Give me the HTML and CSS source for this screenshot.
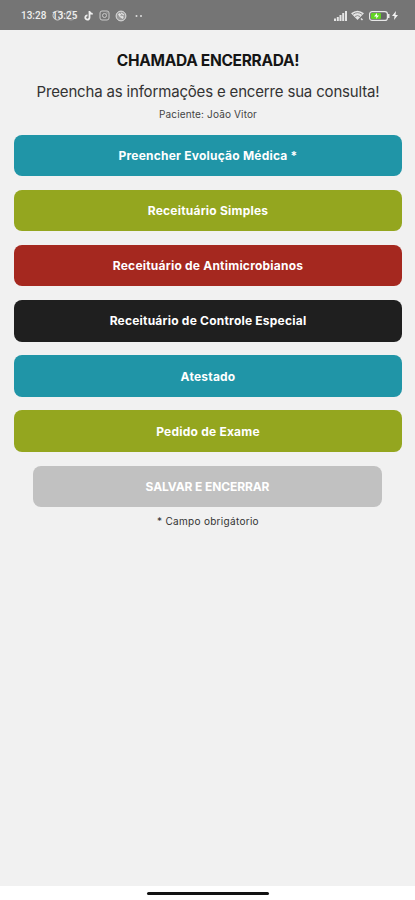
FILE: index.html
```html
<!DOCTYPE html>
<html lang="pt-BR">
<head>
  <meta charset="UTF-8">
  <meta name="viewport" content="width=device-width, initial-scale=1">
  <title>Chamada encerrada</title>
  <link rel="stylesheet" href="styles.css">
</head>
<body>

  <header class="status-bar">
    <div class="status-left">
      <span class="clock">13:28</span>
      <span class="notification">
        <svg width="25" height="11" viewBox="0 0 25 11" fill="none" stroke="#d5d5d5"><circle cx="5.5" cy="5.5" r="4.5"/><circle cx="19" cy="5.5" r="4.5" stroke="#aaa"/></svg>
        <span>13:25</span>
      </span>
      <svg class="tiktok" width="10" height="11" viewBox="0 0 10 11"><path d="M5.5 1v6.5a2.1 2.1 0 1 1-2-2.1M5.5 1c.2 1.8 1.3 2.8 3.2 2.9" fill="none" stroke="#eee" stroke-width="1.8"/></svg>
      <svg class="insta" width="11" height="11" viewBox="0 0 11 11" fill="none" stroke="#c9c9c9"><rect x="1" y="1" width="9" height="9" rx="2"/><circle cx="5.5" cy="5.5" r="2"/><path d="M7.5 3h1"/></svg>
      <svg class="whats" width="12" height="12" viewBox="0 0 12 12" fill="none" stroke="#e0e0e0"><circle cx="6" cy="6" r="4.9" fill="#999"/><path d="M3.5 4c1 2.5 2 3.5 4.5 4.5M4 3.5l2 1.5M6.5 6l2 1.5M6 3l3 2" stroke-width="1.2"/></svg>
      <svg class="more" width="8" height="4" viewBox="0 0 8 4" fill="#dedede"><circle cx="1.5" cy="2" r="1"/><circle cx="6" cy="2" r="1"/></svg>
    </div>
    <div class="status-right">
      <svg width="13" height="10" viewBox="0 0 13 10" fill="#e5e5e5"><path d="M0 7.5h2V10H0zM2.8 6h2v4h-2zM5.5 4h2v6h-2zM8.2 2h2v8h-2zM11 0h2v10h-2z"/></svg>
      <svg width="14" height="11" viewBox="0 0 14 11"><path d="M0 3.3Q6.5-2 13 3.3L6.5 10z" fill="#e5e5e5"/><path d="M2 4.3Q6.5 1 11 4.3M4 6.5q2.5-1.8 5 0" fill="none" stroke="#777" stroke-width=".8"/><path d="M10 8.5l1.5 1.5" stroke="#e5e5e5" stroke-width="1.5"/></svg>
      <svg width="21" height="10" viewBox="0 0 21 10"><rect x=".6" y=".6" width="17.8" height="8.8" rx="2.5" fill="#666" stroke="#e8e8e8" stroke-width="1.2"/><path d="M19 3h1.5v4H19z" fill="#e8e8e8"/><rect x="2" y="2" width="10" height="6" rx="1" fill="#62d322"/><path d="M8 2L5 5.5h2.5L7 8l3-3.5H8z" fill="#fff"/></svg>
      <svg class="bolt" width="6" height="9" viewBox="0 0 6 9"><path d="M4 0L0 5h2.5L2 9l4-5H3.5z" fill="#f2f2f2"/></svg>
    </div>
  </header>

  <main class="content">
    <h1 class="title">CHAMADA ENCERRADA!</h1>
    <p class="subtitle">Preencha as informações e encerre sua consulta!</p>
    <p class="patient">Paciente: João Vitor</p>

    <div class="actions">
      <button class="btn blue">Preencher Evolução Médica *</button>
      <button class="btn green">Receituário Simples</button>
      <button class="btn red">Receituário de Antimicrobianos</button>
      <button class="btn black">Receituário de Controle Especial</button>
      <button class="btn blue">Atestado</button>
      <button class="btn green">Pedido de Exame</button>
      <button class="btn save" disabled>SALVAR E ENCERRAR</button>
    </div>

    <p class="note">* Campo obrigátorio</p>
  </main>

  <footer class="nav-bar">
    <div class="nav-handle"></div>
  </footer>

</body>
</html>
```
FILE: styles.css
```css
* {
  box-sizing: border-box;
}
body {
  margin: 0;
  height: 900px;
  display: flex;
  flex-direction: column;
  overflow: hidden;
  background-color: #f1f1f1;
  font-family: Inter, "Liberation Sans", sans-serif;
  color: #222;
}
.status-bar {
  height: 30px;
  flex: none;
  display: flex;
  justify-content: space-between;
  align-items: center;
  padding: 1px 17px 0 21px;
  background-color: #757575;
  color: #ededed;
}
.status-left,
.status-right {
  display: flex;
  align-items: center;
}
.status-right {
  gap: 4px;
}
.bolt {
  margin-left: -2px;
}
.clock,
.notification {
  width: 25px;
  font-family: Roboto, sans-serif;
  font-size: 10px;
  font-weight: 500;
}
.notification {
  display: grid;
  align-items: center;
  margin: 0 6px;
}
.notification > * {
  grid-area: 1 / 1;
}
.tiktok {
  margin-left: 1px;
}
.insta,
.whats {
  margin-left: 5px;
}
.more {
  margin-left: 8px;
}
.content {
  flex: 1;
  padding: 21px 13px 0 14px;
  text-align: center;
}
.title,
.subtitle,
.patient,
.note {
  margin: 0;
  white-space: nowrap;
}
.title {
  font-size: 15.5px;
  line-height: 20px;
  font-weight: 700;
  letter-spacing: -0.3px;
  color: #151515;
}
.subtitle {
  margin-top: 11px;
  font-size: 15px;
  line-height: 20px;
  letter-spacing: -0.17px;
  color: #333;
}
.patient {
  margin-top: 4px;
  font-size: 10px;
  line-height: 16px;
  letter-spacing: 0.15px;
  color: #444;
}
.actions {
  display: flex;
  flex-direction: column;
  gap: 13.7px;
  margin-top: 12.5px;
}
.btn {
  height: 41.5px;
  padding: 0;
  border: none;
  border-radius: 8px;
  color: #fff;
  font-family: inherit;
  font-size: 12px;
  font-weight: 700;
  letter-spacing: 0.22px;
}
.blue {
  background-color: #2095a7;
}
.green {
  background-color: #94a61f;
}
.red {
  background-color: #a5281f;
}
.black {
  background-color: #1f1f1f;
}
.save {
  margin: 0 20px 0 19px;
  background-color: #c1c1c1;
  letter-spacing: -0.1px;
}
.note {
  margin-top: 6px;
  font-size: 10px;
  line-height: 16px;
  letter-spacing: 0.3px;
  color: #333;
}
.nav-bar {
  height: 14px;
  flex: none;
  padding-top: 6px;
  background-color: #fff;
}
.nav-handle {
  width: 122px;
  height: 3px;
  margin: 0 auto;
  border-radius: 2px;
  background-color: #111;
}
```
